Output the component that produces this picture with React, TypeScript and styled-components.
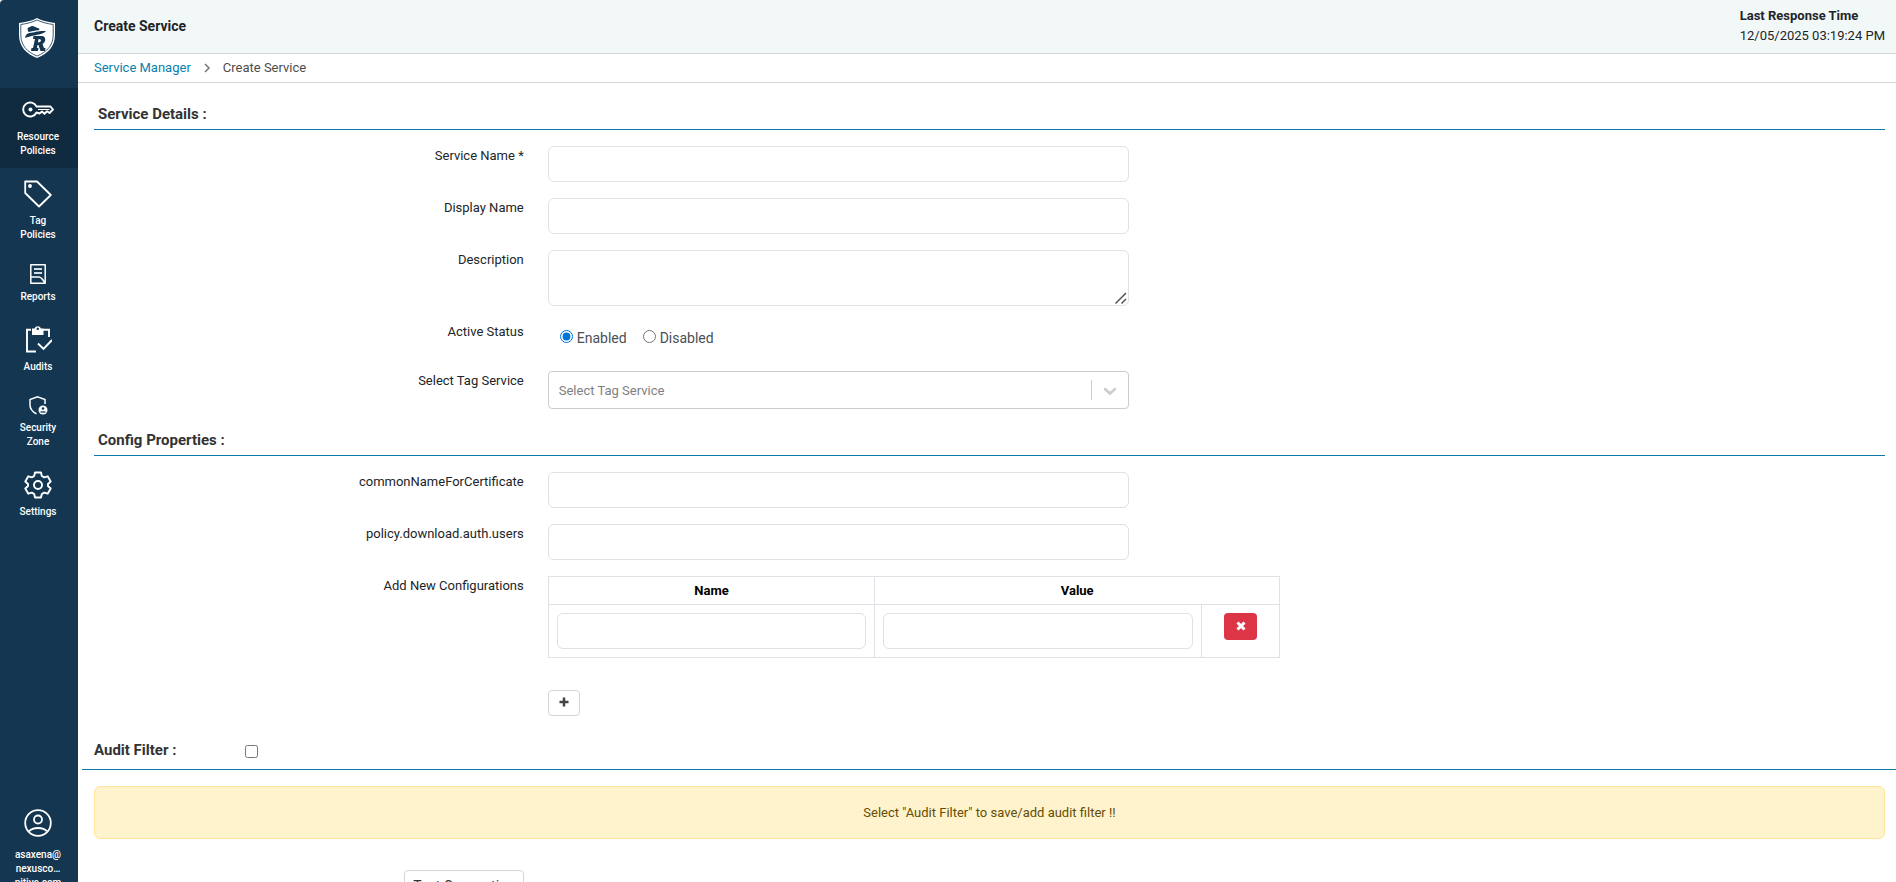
import React from "react";
import styled, { createGlobalStyle, css } from "styled-components";

const color = {
  navy: "#143651",
  navyActive: "#102a3f",
  link: "#0b7fad",
  rule: "#0f7aa5",
  line: "#dee2e6",
  divider: "#d3d6d6",
  text: "#212529",
};

const GlobalStyle = createGlobalStyle`
  *, *::before, *::after { box-sizing: border-box; }
  body {
    margin: 0;
    background: #fff;
    color: ${color.text};
    font: 400 13px/20px Roboto, "Liberation Sans", sans-serif;
  }
  button, input, textarea, select { font: inherit; color: inherit; }
`;

const Shell = styled.div`
  display: flex;
  height: 100vh;
  overflow: hidden;
`;

const Sidebar = styled.nav`
  display: flex;
  flex-direction: column;
  flex: none;
  width: 78px;
  overflow: hidden;
  background: ${color.navy};
  border-top-left-radius: 4px;
`;

const LogoLink = styled.a`
  display: flex;
  justify-content: center;
  flex: none;
  height: 88px;
  padding: 17px 5px 0 0;
`;

const NavItem = styled.button<{ $active?: boolean }>`
  display: flex;
  flex-direction: column;
  align-items: center;
  flex: none;
  gap: 6px;
  width: 100%;
  padding: 12px 2px 10px 0;
  border: 0;
  background: ${(p) => (p.$active ? color.navyActive : "transparent")};
  color: #fff;
  font-size: 10px;
  font-weight: 500;
  line-height: 14px;
  text-align: center;
  cursor: pointer;

  svg { display: block; flex: none; }
  span { white-space: pre-line; }
`;

const UserItem = styled(NavItem)`
  justify-content: flex-start;
  gap: 11px;
  height: 85px;
  margin-top: auto;
  padding-bottom: 0;
  overflow: hidden;
`;

const Main = styled.main`
  flex: 1;
  min-width: 0;
  overflow-x: hidden;
  overflow-y: auto;
  scrollbar-width: none;
`;

const Header = styled.header`
  display: flex;
  justify-content: space-between;
  align-items: center;
  height: 54px;
  padding: 0 11px 2px 16px;
  border-bottom: 1px solid ${color.divider};
  background: #f2f8f8;
`;

const Title = styled.h1`
  margin: 0;
  font-size: 14px;
  font-weight: 700;
`;

const ResponseTime = styled.div`
  display: flex;
  flex-direction: column;
`;

const Breadcrumb = styled.nav`
  display: flex;
  align-items: center;
  gap: 13px;
  height: 29px;
  padding: 0 16px;
  border-bottom: 1px solid ${color.divider};
  color: #4c4c4c;

  a { color: ${color.link}; text-decoration: none; }
`;

const Form = styled.form`
  display: flex;
  flex-direction: column;
  gap: 16px;
  padding: 16px 11px 16px 16px;
`;

const SectionTitle = styled.h2`
  margin: 0;
  padding: 5px 4px;
  border-bottom: 1px solid ${color.rule};
  color: #333;
  font-size: 15px;
  font-weight: 700;
  line-height: 20px;
`;

const gridColumns = css`
  display: grid;
  grid-template-columns: repeat(12, minmax(0, 1fr));
  column-gap: 24px;
`;

const Row = styled.div`
  ${gridColumns}
  align-items: start;
`;

const labelStyle = css`
  grid-column: span 3;
  text-align: right;
`;

const Label = styled.label`${labelStyle}`;
const LabelText = styled.span`${labelStyle}`;

const Field = styled.div<{ $span?: number; $start?: number }>`
  grid-column: ${(p) => p.$start ?? "auto"} / span ${(p) => p.$span ?? 4};
`;

const controlStyle = css`
  display: block;
  width: 100%;
  padding: 6px 12px;
  border: 1px solid ${color.line};
  border-radius: 6px;
  background: #fff;
`;

const TextInput = styled.input`
  ${controlStyle}
  height: 36px;
`;

const TextAreaBox = styled.div`
  position: relative;

  svg {
    position: absolute;
    right: 2px;
    bottom: 2px;
    pointer-events: none;
  }
`;

const TextArea = styled.textarea`
  ${controlStyle}
  height: 56px;
  resize: vertical;

  &::-webkit-resizer { background: transparent; }
`;

const RadioGroup = styled.div`
  display: flex;
  align-items: flex-start;
  gap: 16px;
  height: 33px;
  padding: 6px 12px;
  color: #495057;
  font-size: 14px;

  label { display: flex; align-items: center; gap: 4px; }
  input { width: 13px; height: 13px; margin: 0 0 3px; accent-color: #0075d8; }
`;

const SelectBox = styled.div`
  position: relative;
`;

const Select = styled.select`
  display: block;
  width: 100%;
  height: 38px;
  padding: 2px 48px 0 10px;
  border: 1px solid #ccc;
  border-radius: 4px;
  background: #fff;
  color: #808080;
  appearance: none;
`;

const SelectIndicator = styled.span`
  position: absolute;
  top: 9px;
  right: 1px;
  display: flex;
  align-items: center;
  justify-content: center;
  width: 37px;
  height: 20px;
  border-left: 1px solid #ccc;
  pointer-events: none;
`;

const ConfigTable = styled.table`
  width: 100%;
  border-collapse: collapse;
  table-layout: fixed;

  th, td { border: 1px solid ${color.line}; vertical-align: top; }
  th { padding: 4px; line-height: 19px; color: #000; font-weight: 700; text-align: center; }
  td { padding: 8px; text-align: center; }
`;

const RemoveButton = styled.button`
  display: inline-flex;
  align-items: center;
  justify-content: center;
  width: 33px;
  height: 27px;
  padding: 0 0 2px;
  border: 0;
  border-radius: 4px;
  background: #dc3545;
`;

const OutlineButton = styled.button`
  border: 1px solid #d3d6d9;
  border-radius: 4px;
  background: #fff;
  color: #333;
`;

const AddButton = styled(OutlineButton)`
  display: flex;
  align-items: center;
  justify-content: center;
  width: 32px;
  height: 26px;
  margin-top: 16px;
  padding: 0 0 3px;
`;

const TestButton = styled(OutlineButton)`
  height: 31px;
  padding: 0 8px;
  font-size: 14px;
`;

const TestCell = styled.div`
  grid-column: span 3;
  display: flex;
  justify-content: flex-end;
  margin-top: 15px;
`;

const AuditHeading = styled.div`
  ${gridColumns}
  margin: 8px -12px 0;
  padding: 0 12px 9px;
  border-bottom: 1px solid ${color.rule};

  label {
    color: #333;
    font-size: 15px;
    font-weight: 700;
    white-space: nowrap;
  }
  input { width: 13px; height: 13px; margin: 5px 0 0; }
`;

const Alert = styled.div`
  padding: 16px;
  border: 1px solid #ffe69c;
  border-radius: 6px;
  background: #fff3cd;
  color: #664d03;
  line-height: 19px;
  text-align: center;
`;

const Logo = () => (
  <svg width="38" height="42" viewBox="0 0 38 42">
    <path d="M19 1 C14 4 7 5 1 6 V18 C1 29 8 37 19 41 C30 37 37 29 37 18 V6 C31 5 24 4 19 1Z" fill="#fff" />
    <path d="M19 3 C14 5.500 8 6.800 2.800 7.500 V18 C2.800 28 9 35 19 39 C29 35 35.200 28 35.200 18 V7.500 C30 6.800 24 5.500 19 3Z" fill="none" stroke={color.navy} strokeWidth=".8" />
    <path d="M10.500 15 C9.500 12.500 9 11 10.500 10.500 C12 10.500 12.500 9 14 9 C16.500 9 18 10.500 21 11.500 L21.500 13 C16 13.500 14 14.500 10.500 15Z" fill={color.navy} />
    <path d="M7 21 C7.500 18 9 16.500 11.500 16 C17 15.500 20 13.500 28 14 C26 17 20 17.500 16 18.500 C12 19.300 10 20 7 21Z" fill={color.navy} />
    <path fillRule="evenodd" d="M15.500 19 H24 C28 19 28.500 25 24.500 27 L26 31 H27.500 L27 34 H22.500 L20.500 28 H19.500 L19 31 H20.500 L20 34 H13 L13.500 31 H15 L17 22 H15Z M20.500 22 L20 25.500 C23 25.500 24.500 22 20.500 22Z" fill={color.navy} />
  </svg>
);

const KeyIcon = () => (
  <svg width="32" height="24" viewBox="0 0 32 24" fill="none" stroke="#fff" strokeWidth="1.900" strokeLinejoin="round">
    <path d="M14.500 6.500 H28.500 L31 9.500 L27.500 13 L25 11.300 L22.500 13.700 L20 11.500 L17.500 13.500 L14.500 12.500 A7 7 0 1 1 14.500 6.500Z" />
    <circle cx="8.500" cy="9.500" r="2" fill="#fff" stroke="none" />
    <path d="M16 9.500 H27.500" strokeWidth="1.200" />
  </svg>
);

const TagIcon = () => (
  <svg width="28" height="28" viewBox="0 0 28 28" fill="none" stroke="#fff" strokeWidth="1.800" strokeLinejoin="round">
    <path d="M1.200 1.500 H13 L26.800 15 L15 26.500 L1.200 13Z" />
    <circle cx="6" cy="6" r="1.900" fill="#fff" stroke="none" />
  </svg>
);

const ReportIcon = () => (
  <svg width="16" height="20" viewBox="0 0 16 20" fill="none" stroke="#fff" strokeWidth="1.500" strokeLinejoin="round">
    <path d="M.8 .8 H15.200 V19.200 H.8Z M.8 13 H9 C11 13 12 14 15 19" />
    <path d="M4 5 H12 M4 9 H12" stroke="#d3dce3" strokeWidth="1.800" />
  </svg>
);

const AuditIcon = () => (
  <svg width="28" height="28" viewBox="0 0 28 28" fill="none" stroke="#fff" strokeWidth="1.900">
    <path d="M7 3.800 H3 V25.500 H12 M19 3.800 H25 V11" />
    <path d="M14 17.500 L19.500 23 L28 14" />
    <path fillRule="evenodd" d="M8 2.500 H10.500 A3.500 3.500 0 0 1 17 2.500 H19.500 V9 H8Z M13.700 1.600 A1.200 1.200 0 1 0 13.800 1.600Z" fill="#fff" stroke="none" />
  </svg>
);

const ZoneIcon = () => (
  <svg width="20" height="19" viewBox="0 0 20 19">
    <path d="M8.500 17.800 C4 15.500 2 12.500 2 9 V3.500 L9.500 .9 L17 3.500 V8" fill="none" stroke="#fff" strokeWidth="1.500" />
    <circle cx="15" cy="14" r="4.500" fill="#fff" />
    <circle cx="15" cy="12.500" r="1.300" fill={color.navy} />
    <path d="M12.500 16 H17.500" fill="none" stroke={color.navy} strokeWidth="1.300" />
  </svg>
);

const GearIcon = () => (
  <svg width="28" height="28" viewBox="0 0 28 28" fill="none" stroke="#fff" strokeWidth="1.900" strokeLinejoin="round">
    <path d="M11 1.500 H17 L17.800 5 L20.200 6.400 L23.700 5.300 L26.700 10.500 L24 13 V15 L26.700 17.500 L23.700 22.700 L20.200 21.600 L17.800 23 L17 26.500 H11 L10.200 23 L7.800 21.600 L4.300 22.700 L1.300 17.500 L4 15 V13 L1.300 10.500 L4.300 5.300 L7.800 6.400 L10.200 5Z" />
    <circle cx="14" cy="14" r="4" />
  </svg>
);

const UserIcon = () => (
  <svg width="28" height="28" viewBox="0 0 28 28" fill="none" stroke="#fff" strokeWidth="1.800">
    <circle cx="14" cy="14" r="12.800" />
    <circle cx="14" cy="10.500" r="4" />
    <path d="M4.800 22.500 C7 20 10 19 14 19 C18 19 21 20 23.200 22.500" />
  </svg>
);

const CrumbArrow = () => (
  <svg width="6" height="10" viewBox="0 0 6 10" fill="none" stroke="#6c757d" strokeWidth="1.500">
    <path d="M1 1 L5 5 L1 9" />
  </svg>
);

const ResizeGrip = () => (
  <svg width="12" height="12" viewBox="0 0 12 12" fill="none" stroke="#555" strokeWidth="1.500">
    <path d="M.5 11.500 L11 1 M6.500 11.500 L11 7" />
  </svg>
);

const ChevronDown = () => (
  <svg width="20" height="20" viewBox="0 0 20 20" fill="none" stroke="#ccc" strokeWidth="2.500" strokeLinecap="round">
    <path d="M5 9 L10 13.500 L15 9" />
  </svg>
);

const CrossIcon = () => (
  <svg width="10" height="10" viewBox="0 0 10 10" stroke="#fff" strokeWidth="3">
    <path d="M1.500 1.500 L8.500 8.500 M8.500 1.500 L1.500 8.500" />
  </svg>
);

const PlusIcon = () => (
  <svg width="10" height="10" viewBox="0 0 10 10" stroke="#444" strokeWidth="2.500">
    <path d="M5 .5 V9.500 M.5 5 H9.500" />
  </svg>
);

const navItems = [
  { label: "Resource\nPolicies", Icon: KeyIcon, active: true },
  { label: "Tag\nPolicies", Icon: TagIcon },
  { label: "Reports", Icon: ReportIcon },
  { label: "Audits", Icon: AuditIcon },
  { label: "Security\nZone", Icon: ZoneIcon },
  { label: "Settings", Icon: GearIcon },
];

const TextRow = ({ id, label }: { id: string; label: string }) => (
  <Row>
    <Label htmlFor={id}>{label}</Label>
    <Field>
      <TextInput id={id} type="text" />
    </Field>
  </Row>
);

export default function App() {
  return (
    <Shell>
      <GlobalStyle />
      <Sidebar aria-label="Main">
        <LogoLink href="#" aria-label="Ranger home">
          <Logo />
        </LogoLink>
        {navItems.map(({ label, Icon, active }) => (
          <NavItem key={label} type="button" $active={active}>
            <Icon />
            <span>{label}</span>
          </NavItem>
        ))}
        <UserItem type="button">
          <UserIcon />
          <span>{"asaxena@\nnexusco…\nnitive.com"}</span>
        </UserItem>
      </Sidebar>

      <Main>
        <Header>
          <Title>Create Service</Title>
          <ResponseTime>
            <strong>Last Response Time</strong>
            <span>12/05/2025 03:19:24 PM</span>
          </ResponseTime>
        </Header>
        <Breadcrumb aria-label="Breadcrumb">
          <a href="#">Service Manager</a>
          <CrumbArrow />
          <span>Create Service</span>
        </Breadcrumb>

        <Form onSubmit={(e) => e.preventDefault()}>
          <SectionTitle>Service Details :</SectionTitle>
          <TextRow id="service-name" label="Service Name *" />
          <TextRow id="display-name" label="Display Name" />
          <Row>
            <Label htmlFor="description">Description</Label>
            <Field>
              <TextAreaBox>
                <TextArea id="description" />
                <ResizeGrip />
              </TextAreaBox>
            </Field>
          </Row>
          <Row>
            <LabelText id="status-label">Active Status</LabelText>
            <Field>
              <RadioGroup role="radiogroup" aria-labelledby="status-label">
                <label>
                  <input type="radio" name="status" defaultChecked />
                  Enabled
                </label>
                <label>
                  <input type="radio" name="status" />
                  Disabled
                </label>
              </RadioGroup>
            </Field>
          </Row>
          <Row>
            <Label htmlFor="tag-service">Select Tag Service</Label>
            <Field>
              <SelectBox>
                <Select id="tag-service">
                  <option>Select Tag Service</option>
                </Select>
                <SelectIndicator>
                  <ChevronDown />
                </SelectIndicator>
              </SelectBox>
            </Field>
          </Row>

          <SectionTitle>Config Properties :</SectionTitle>
          <TextRow id="common-name" label="commonNameForCertificate" />
          <TextRow id="auth-users" label="policy.download.auth.users" />
          <Row>
            <LabelText id="config-label">Add New Configurations</LabelText>
            <Field $span={5}>
              <ConfigTable aria-labelledby="config-label">
                <colgroup>
                  <col />
                  <col />
                  <col width="78" />
                </colgroup>
                <thead>
                  <tr>
                    <th>Name</th>
                    <th colSpan={2}>Value</th>
                  </tr>
                </thead>
                <tbody>
                  <tr>
                    <td>
                      <TextInput type="text" aria-label="Name" />
                    </td>
                    <td>
                      <TextInput type="text" aria-label="Value" />
                    </td>
                    <td>
                      <RemoveButton type="button" aria-label="Remove">
                        <CrossIcon />
                      </RemoveButton>
                    </td>
                  </tr>
                </tbody>
              </ConfigTable>
            </Field>
          </Row>
          <Row>
            <Field $start={4}>
              <AddButton type="button" aria-label="Add">
                <PlusIcon />
              </AddButton>
            </Field>
          </Row>

          <AuditHeading>
            <label htmlFor="audit-filter">Audit Filter :</label>
            <input id="audit-filter" type="checkbox" />
          </AuditHeading>
          <Alert>Select "Audit Filter" to save/add audit filter !!</Alert>
          <Row>
            <TestCell>
              <TestButton type="button">Test Connection</TestButton>
            </TestCell>
          </Row>
        </Form>
      </Main>
    </Shell>
  );
}
